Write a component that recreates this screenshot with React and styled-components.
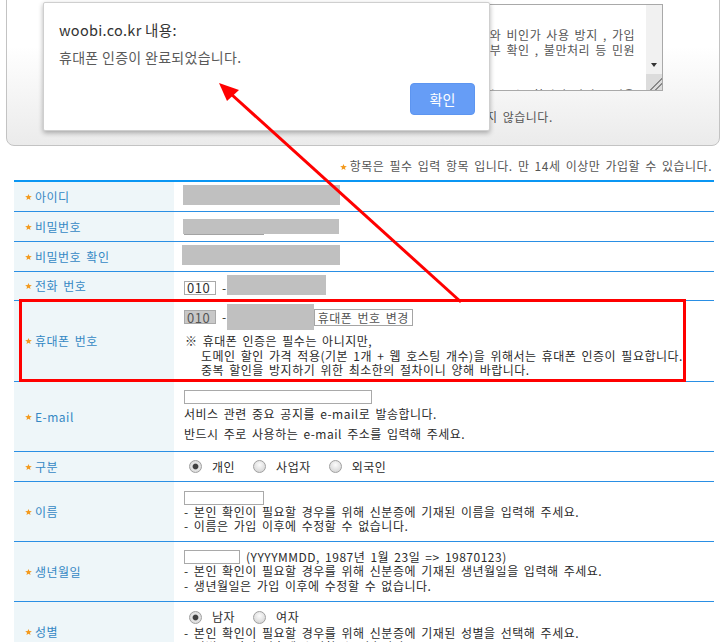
import React from 'react';
import styled, { createGlobalStyle, css } from 'styled-components';

const GlobalStyle = createGlobalStyle`
	html, body { margin: 0; padding: 0; background: #fff; }
	body {
		font-family: "Noto Sans CJK KR", "Noto Sans", sans-serif;
		font-size: 12px;
		color: #333;
	}
`;

const Page = styled.div`
	position: relative;
	width: 722px;
	height: 642px;
	overflow: hidden;
	word-spacing: 2px;
	letter-spacing: 0.5px;
`;

/* terms box at the top, scrolled half out of view */
const TermsPanel = styled.div`
	box-sizing: border-box;
	height: 166px;
	margin: -20px 2px 0 6px;
	padding: 23px 0 0 53px;
	border: 1px solid #c3c3c3;
	border-radius: 0 0 8px 8px;
	background: linear-gradient(#fff 0%, #fff 40%, #ebebeb 100%);
`;
const TermsBox = styled.div`
	box-sizing: border-box;
	display: flex;
	width: 603px;
	height: 87px;
	border: 1px solid #a9a9a9;
	background: #fff;
`;
const TermsText = styled.div`
	flex: 1;
	min-width: 0;
	overflow: hidden;
	padding: 7px 11px 0 5px;
	line-height: 15px;
	color: #555;
`;
const TermsLine = styled.div`
	white-space: nowrap;
	text-align: ${p => (p.$right ? 'right' : 'left')};
`;
const Scrollbar = styled.div`
	display: flex;
	flex-direction: column;
	width: 16px;
	background: #f1f1f1;
`;
const ScrollTrack = styled.div`
	flex: 1;
`;
const ScrollButton = styled.div`
	height: 17px;
	display: flex;
	align-items: center;
	justify-content: center;
	&::before {
		content: '';
		border-left: 3.5px solid transparent;
		border-right: 3.5px solid transparent;
		border-top: 4px solid #333;
		margin-top: -2px;
	}
`;
const ResizeCorner = styled.div`
	height: 16px;
	background:
		linear-gradient(135deg, transparent 0 62%, #888 62% 67%, transparent 67% 78%, #888 78% 83%, transparent 83%),
		#dcdcdc;
`;
const TermsNote = styled.div`
	margin-top: 19px;
	padding-left: 96px;
	line-height: 14px;
	color: #555;
`;

const Notice = styled.div`
	margin: 13px 10px 7px 0;
	text-align: right;
	line-height: 14px;
	color: #555;
`;

const StarIcon = () => (
	<svg width="7" height="6" viewBox="0 0 10 9" style={{ marginRight: 3, verticalAlign: 1 }}>
		<polygon points="5,0 6.3,3.1 10,3.3 7.1,5.5 8.1,9 5,7 1.9,9 2.9,5.5 0,3.3 3.7,3.1" fill="#f39a1e" />
	</svg>
);

/* sign-up table */
const FormTable = styled.div`
	margin-left: 14px;
	width: 700px;
	border-top: 2px solid #0a96f3;
`;
const Row = styled.div`
	display: flex;
	box-sizing: border-box;
	height: ${p => p.$h}px;
	border-bottom: 1px solid #2a8fe4;
`;
const Label = styled.div`
	flex: none;
	box-sizing: border-box;
	width: 160px;
	display: flex;
	align-items: center;
	padding-left: 11px;
	background: #eef6f9;
	color: #3588c4;
	line-height: 14px;
`;
const Cell = styled.div`
	flex: 1;
	display: flex;
	flex-direction: column;
	justify-content: center;
	align-items: flex-start;
	padding: 0 10px;
	line-height: 14px;
	color: #2b2b2b;
`;
const Masked = styled.div`
	flex: none;
	width: ${p => p.$w}px;
	height: ${p => p.$h}px;
	margin-left: ${p => p.$ml || 0}px;
	margin-top: ${p => p.$mt || 0}px;
	background: #c0c0c0;
`;
const Underline = styled.div`
	width: 80px;
	height: 1px;
	background: #a3a3a3;
`;
const Line = styled.div`
	display: flex;
	align-items: ${p => p.$align || 'center'};
`;
const TextInput = styled.input`
	box-sizing: border-box;
	width: ${p => p.$w}px;
	height: 14px;
	margin: 0;
	padding: 0 2px;
	border: 1px solid #a9a9a9;
	background: ${p => (p.$disabled ? '#c8c8c8' : '#fff')};
	font: 13px "Noto Sans CJK KR", sans-serif;
	letter-spacing: 0.5px;
	color: ${p => (p.$disabled ? '#555' : '#333')};
	outline: none;
`;
const Dash = styled.span`
	margin-left: 6px;
`;
const SmallButton = styled.button`
	box-sizing: border-box;
	height: 17px;
	margin: 0;
	padding: 0 3px;
	border: 1px solid #a5a5a5;
	background: #fff;
	font: 12px "Noto Sans CJK KR", sans-serif;
	word-spacing: 2px;
	letter-spacing: 0.5px;
	color: #555;
	line-height: 15px;
`;
const Help = styled.div`
	line-height: ${p => p.$lh || 14.5}px;
	margin-top: ${p => p.$mt || 0}px;
	padding-left: ${p => p.$hang || 0}px;
	text-indent: -${p => p.$hang || 0}px;
	margin-left: ${p => p.$ml || 0}px;
`;
const Hint = styled.span`
	margin-left: 6px;
`;
const RadioGroup = styled.div`
	display: flex;
	align-items: center;
	margin-left: 5px;
	height: 17px;
`;
const RadioOption = styled.label`
	display: flex;
	align-items: center;
	margin-right: 18px;
`;
const Radio = styled.span`
	flex: none;
	box-sizing: border-box;
	width: 13px;
	height: 13px;
	margin-right: 10px;
	border-radius: 50%;
	border: 1px solid #a0a0a0;
	background: radial-gradient(circle at 50% 35%, #fbfbfb 0%, #e2e2e2 55%, #cfcfcf 100%);
	${p => p.$checked && css`
		background: radial-gradient(circle, #404040 0 2.3px, #8a8a8a 2.8px, #e6e6e6 3.4px, #d2d2d2 100%);
	`}
`;

/* overlays: the annotation box, arrow and browser alert */
const Highlight = styled.div`
	position: absolute;
	left: 19px;
	top: 299px;
	width: 667px;
	height: 83px;
	box-sizing: border-box;
	border: 3px solid #ff0000;
	pointer-events: none;
`;
const ArrowLayer = styled.svg`
	position: absolute;
	left: 0;
	top: 0;
	z-index: 3;
	pointer-events: none;
`;
const Alert = styled.div`
	position: absolute;
	left: 43px;
	top: 2px;
	z-index: 2;
	box-sizing: border-box;
	width: 447px;
	height: 129px;
	padding: 17px 14px 0 15px;
	background: #fff;
	border: 1px solid #cfcfcf;
	border-radius: 2px;
	box-shadow: 0 2px 5px rgba(0, 0, 0, 0.3);
	word-spacing: normal;
	letter-spacing: normal;
`;
const AlertTitle = styled.div`
	font-size: 14.5px;
	letter-spacing: 0.3px;
	line-height: 20px;
	color: #333;
`;
const AlertMessage = styled.div`
	margin-top: 8px;
	font-size: 14px;
	letter-spacing: 0.3px;
	line-height: 18px;
	color: #5a5a5a;
`;
const AlertActions = styled.div`
	display: flex;
	justify-content: flex-end;
	margin-top: 17px;
`;
const AlertButton = styled.button`
	width: 65px;
	height: 32px;
	border: 1px solid #5d95f0;
	border-radius: 4px;
	background: #669df6;
	color: #fff;
	font: 14px "Noto Sans CJK KR", sans-serif;
`;

const rows = { id: 30, pw: 30, pw2: 30, tel: 29, hp: 81, mail: 70, kind: 30, name: 60, birth: 60, sex: 60 };

const Field = ({ label, h, children }) => (
	<Row $h={h}>
		<Label><StarIcon />{label}</Label>
		<Cell>{children}</Cell>
	</Row>
);

const App = () => (
	<Page>
		<GlobalStyle />
		<TermsPanel>
			<TermsBox>
				<TermsText>
					<TermsLine>1. 수집하는 개인정보의 이용 목적</TermsLine>
					<TermsLine $right>- 회원 관리 : 본인확인, 개인 식별, 불량회원의 부정 이용 방지와 비인가 사용 방지 , 가입</TermsLine>
					<TermsLine $right>의사 확인, 연령확인, 법정 대리인 동의여부 확인 , 불만처리 등 민원</TermsLine>
					<TermsLine>처리, 고지사항 전달</TermsLine>
					<TermsLine>- 서비스 제공에 관한 계약 이행</TermsLine>
					<TermsLine $right>콘텐츠 제공, 구매 및 요금 결제, 물품배송 또는 회원의 서비스 이용</TermsLine>
				</TermsText>
				<Scrollbar>
					<ScrollTrack />
					<ScrollButton />
					<ResizeCorner />
				</Scrollbar>
			</TermsBox>
			<TermsNote>개인정보 수집 및 이용에 동의하지 않으실 경우 회원가입이 되지 않습니다.</TermsNote>
		</TermsPanel>

		<Notice><StarIcon />항목은 필수 입력 항목 입니다. 만 14세 이상만 가입할 수 있습니다.</Notice>

		<FormTable>
			<Field label="아이디" h={rows.id}>
				<Masked $w={157} $h={20} $ml={-1} $mt={-3} />
			</Field>
			<Field label="비밀번호" h={rows.pw}>
				<Masked $w={156} $h={15} $ml={-1} />
				<Underline />
			</Field>
			<Field label="비밀번호 확인" h={rows.pw2}>
				<Masked $w={158} $h={20} $ml={-2} $mt={-3} />
			</Field>
			<Field label="전화 번호" h={rows.tel}>
				<Line $align="flex-end">
					<TextInput $w={32} defaultValue="010" readOnly />
					<Dash>-</Dash>
					<Masked $w={99} $h={20} $mt={-3} />
				</Line>
			</Field>
			<Field label="휴대폰 번호" h={rows.hp}>
				<Line>
					<TextInput $w={32} $disabled defaultValue="010" readOnly />
					<Dash>-</Dash>
					<Masked $w={87} $h={26} />
					<SmallButton>휴대폰 번호 변경</SmallButton>
				</Line>
				<Help $mt={4} $hang={16} $ml={1}>
					※ 휴대폰 인증은 필수는 아니지만,<br />
					도메인 할인 가격 적용(기본 1개 + 웹 호스팅 개수)을 위해서는 휴대폰 인증이 필요합니다.<br />
					중복 할인을 방지하기 위한 최소한의 절차이니 양해 바랍니다.
				</Help>
			</Field>
			<Field label="E-mail" h={rows.mail}>
				<TextInput $w={188} />
				<Help $lh={20}>
					서비스 관련 중요 공지를 e-mail로 발송합니다.<br />
					반드시 주로 사용하는 e-mail 주소를 입력해 주세요.
				</Help>
			</Field>
			<Field label="구분" h={rows.kind}>
				<RadioGroup>
					<RadioOption><Radio $checked />개인</RadioOption>
					<RadioOption><Radio />사업자</RadioOption>
					<RadioOption><Radio />외국인</RadioOption>
				</RadioGroup>
			</Field>
			<Field label="이름" h={rows.name}>
				<TextInput $w={80} />
				<Help $lh={14}>
					- 본인 확인이 필요할 경우를 위해 신분증에 기재된 이름을 입력해 주세요.<br />
					- 이름은 가입 이후에 수정할 수 없습니다.
				</Help>
			</Field>
			<Field label="생년월일" h={rows.birth}>
				<Line>
					<TextInput $w={56} />
					<Hint>(YYYYMMDD, 1987년 1월 23일 =&gt; 19870123)</Hint>
				</Line>
				<Help>
					- 본인 확인이 필요할 경우를 위해 신분증에 기재된 생년월일을 입력해 주세요.<br />
					- 생년월일은 가입 이후에 수정할 수 없습니다.
				</Help>
			</Field>
			<Field label="성별" h={rows.sex}>
				<RadioGroup>
					<RadioOption><Radio $checked />남자</RadioOption>
					<RadioOption><Radio />여자</RadioOption>
				</RadioGroup>
				<Help>
					- 본인 확인이 필요할 경우를 위해 신분증에 기재된 성별을 선택해 주세요.<br />
					- 성별은 가입 이후에 수정할 수 없습니다.
				</Help>
			</Field>
		</FormTable>

		<Highlight />

		<Alert>
			<AlertTitle>woobi.co.kr 내용:</AlertTitle>
			<AlertMessage>휴대폰 인증이 완료되었습니다.</AlertMessage>
			<AlertActions>
				<AlertButton>확인</AlertButton>
			</AlertActions>
		</Alert>

		<ArrowLayer width="722" height="642" viewBox="0 0 722 642">
			<line x1="461" y1="302" x2="231" y2="94" stroke="#ff0000" strokeWidth="3" />
			<polygon points="219,83 227,101 239,90" fill="#ff0000" />
		</ArrowLayer>
	</Page>
);

export default App;
